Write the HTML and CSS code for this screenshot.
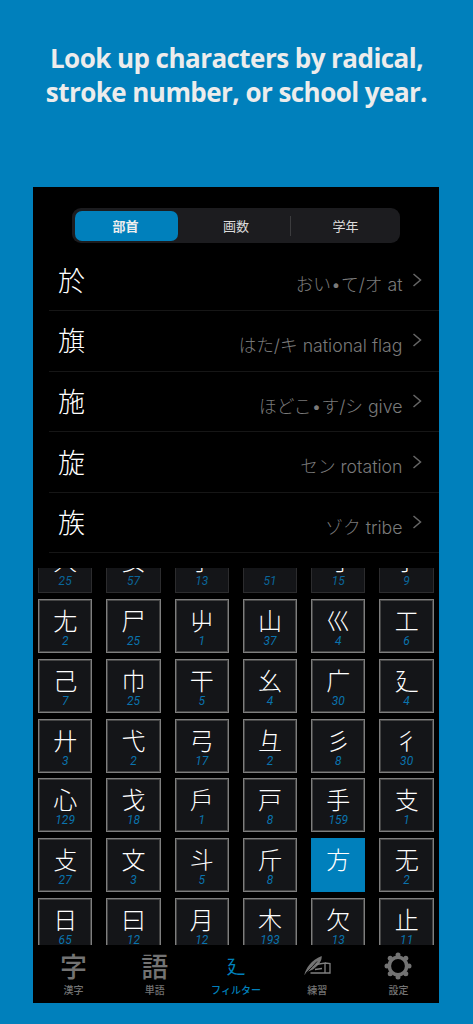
FILE: index.html
```html
<!DOCTYPE html>
<html lang="ja">
<head>
<meta charset="utf-8">
<title>Radicals</title>
<link rel="stylesheet" href="styles.css">
</head>
<body>
<h1 class="headline" lang="en">Look up characters by radical,<br>stroke number, or school year.</h1>
<main class="phone">
  <div class="segments">
    <div class="segment active">部首</div>
    <div class="segment shifted">画数</div>
    <div class="segment shifted split">学年</div>
  </div>
  <ul class="list">
    <li class="row"><span class="kanji">於</span><span class="reading">おい•て/オ at</span><svg class="chev" viewBox="0 0 10 14"><path d="M1.5 1l7 6-7 6"/></svg></li>
    <li class="row"><span class="kanji">旗</span><span class="reading">はた/キ national flag</span><svg class="chev" viewBox="0 0 10 14"><path d="M1.5 1l7 6-7 6"/></svg></li>
    <li class="row"><span class="kanji">施</span><span class="reading">ほどこ•す/シ give</span><svg class="chev" viewBox="0 0 10 14"><path d="M1.5 1l7 6-7 6"/></svg></li>
    <li class="row"><span class="kanji">旋</span><span class="reading">セン rotation</span><svg class="chev" viewBox="0 0 10 14"><path d="M1.5 1l7 6-7 6"/></svg></li>
    <li class="row"><span class="kanji">族</span><span class="reading">ゾク tribe</span><svg class="chev" viewBox="0 0 10 14"><path d="M1.5 1l7 6-7 6"/></svg></li>
  </ul>
  <div class="clip">
    <div class="grid">
      <div class="cell dim"><b>大</b><i>25</i></div><div class="cell dim"><b>女</b><i>57</i></div><div class="cell dim"><b>子</b><i>13</i></div><div class="cell dim"><b>宀</b><i>51</i></div><div class="cell dim"><b>寸</b><i>15</i></div><div class="cell dim"><b>小</b><i>9</i></div>
      <div class="cell"><b>尢</b><i>2</i></div><div class="cell"><b>尸</b><i>25</i></div><div class="cell"><b>屮</b><i>1</i></div><div class="cell"><b>山</b><i>37</i></div><div class="cell"><b>巛</b><i>4</i></div><div class="cell"><b>工</b><i>6</i></div>
      <div class="cell"><b>己</b><i>7</i></div><div class="cell"><b>巾</b><i>25</i></div><div class="cell"><b>干</b><i>5</i></div><div class="cell"><b>幺</b><i>4</i></div><div class="cell"><b>广</b><i>30</i></div><div class="cell"><b>廴</b><i>4</i></div>
      <div class="cell"><b>廾</b><i>3</i></div><div class="cell"><b>弋</b><i>2</i></div><div class="cell"><b>弓</b><i>17</i></div><div class="cell"><b>彑</b><i>2</i></div><div class="cell"><b>彡</b><i>8</i></div><div class="cell"><b>彳</b><i>30</i></div>
      <div class="cell"><b>心</b><i>129</i></div><div class="cell"><b>戈</b><i>18</i></div><div class="cell"><b>戶</b><i>1</i></div><div class="cell"><b>戸</b><i>8</i></div><div class="cell"><b>手</b><i>159</i></div><div class="cell"><b>支</b><i>1</i></div>
      <div class="cell"><b>攴</b><i>27</i></div><div class="cell"><b>文</b><i>3</i></div><div class="cell"><b>斗</b><i>5</i></div><div class="cell"><b>斤</b><i>8</i></div><div class="cell selected"><b>方</b><i></i></div><div class="cell"><b>无</b><i>2</i></div>
      <div class="cell"><b>日</b><i>65</i></div><div class="cell"><b>曰</b><i>12</i></div><div class="cell"><b>月</b><i>12</i></div><div class="cell"><b>木</b><i>193</i></div><div class="cell"><b>欠</b><i>13</i></div><div class="cell"><b>止</b><i>11</i></div>
    </div>
  </div>
  <nav class="tabs">
    <div class="tab"><span class="tab-glyph">字</span><span class="tab-label">漢字</span></div>
    <div class="tab"><span class="tab-glyph">語</span><span class="tab-label">単語</span></div>
    <div class="tab current"><span class="tab-glyph thin">廴</span><span class="tab-label">フィルター</span></div>
    <div class="tab">
      <svg class="tab-icon" viewBox="0 0 28 28">
        <path class="pen" d="M1.300 23C3 16 8 8 18.700 4C19.200 9 15 14 10 17.500L5 19.500Z"/>
        <path class="pen-cut" d="M2.500 21.500L9.500 14.500 14 9.500"/>
        <path class="pen-line" d="M13 12.500L22 11V21H7.500M22 11L27 11.500V21H22M12 17.500L19 16.500"/>
      </svg>
      <span class="tab-label">練習</span>
    </div>
    <div class="tab">
      <svg class="tab-icon" viewBox="0 0 28 28">
        <g class="gear">
          <circle cx="14" cy="3" r="2.500"/><circle cx="14" cy="25" r="2.500"/><circle cx="3" cy="14" r="2.500"/><circle cx="25" cy="14" r="2.500"/>
          <circle cx="6.200" cy="6.200" r="2.500"/><circle cx="21.800" cy="6.200" r="2.500"/><circle cx="6.200" cy="21.800" r="2.500"/><circle cx="21.800" cy="21.800" r="2.500"/>
        </g>
        <circle class="gear-ring" cx="14" cy="14" r="8.700"/>
      </svg>
      <span class="tab-label">設定</span>
    </div>
  </nav>
</main>
</body>
</html>
```
FILE: styles.css
```css
* { box-sizing: border-box; }
html, body { margin: 0; padding: 0; }
body {
  width: 473px;
  height: 1024px;
  overflow: hidden;
  background: #0080bc;
  font-family: "Noto Sans CJK JP", "Noto Sans", sans-serif;
}
.headline {
  margin: 0;
  padding-top: 41px;
  height: 187px;
  text-align: center;
  color: #ececec;
  font-family: "Open Sans", "Noto Sans", sans-serif;
  font-weight: 700;
  font-size: 26px;
  letter-spacing: -0.55px;
  line-height: 34px;
}
.phone {
  margin-left: 33px;
  width: 406px;
  height: 816px;
  background: #000;
  display: flex;
  flex-direction: column;
}
.segments {
  margin: 21px 0 0 39px;
  width: 328px;
  height: 35px;
  padding: 2.5px 3px;
  border-radius: 9px;
  background: #1c1c1f;
  display: grid;
  grid-template-columns: 103px 112px 1fr;
  align-items: center;
}
.segment {
  height: 30.500px;
  line-height: 30.500px;
  text-align: center;
  color: #dcdcdc;
  font-size: 13px;
  position: relative;
}
.segment.shifted { padding-left: 4px; }
.segment.active {
  background: #0080bc;
  border-radius: 7px;
  color: #eee;
  font-weight: 700;
  padding-right: 2px;
}
.segment.split::before {
  content: "";
  position: absolute;
  left: 0;
  top: 5px;
  height: 20px;
  width: 1px;
  background: #3c3c3e;
}
.list {
  list-style: none;
  margin: 7.500px 0 0 15.500px;
  padding: 0;
}
.row {
  height: 60.600px;
  border-bottom: 1px solid #161616;
  display: flex;
  align-items: center;
  padding: 0 17.500px 0 9.500px;
}
.kanji {
  color: #fff;
  font-size: 27px;
  font-weight: 300;
  line-height: 1;
  margin-top: -2px;
}
.reading {
  margin-left: auto;
  color: #7a7a7a;
  font-family: Inter, "Noto Sans CJK JP", sans-serif;
  font-size: 17.700px;
  font-weight: 300;
  line-height: 1;
  margin-top: 10px;
}
.chev {
  width: 10px;
  height: 14px;
  margin-left: 9px;
  margin-top: -1px;
  fill: none;
  stroke: #666;
  stroke-width: 1.500;
}
.clip {
  height: 377px;
  margin-top: 14.500px;
  overflow: hidden;
}
.grid {
  margin: -28.500px 0 0 5px;
  width: 396px;
  display: grid;
  grid-template-columns: repeat(6, 54.300px);
  grid-auto-rows: 54px;
  column-gap: 14px;
  row-gap: 5.750px;
}
.cell {
  border: 1px solid #7e7e7e;
  box-shadow: inset 0 0 0 1px #444;
  background: #141518;
  display: flex;
  flex-direction: column;
  align-items: center;
  padding-top: 8px;
}
.cell b {
  color: #fff;
  font-size: 24px;
  font-weight: 300;
  line-height: 24px;
}
.cell i {
  color: #0a73ad;
  font-family: Roboto, "Noto Sans", sans-serif;
  font-size: 12px;
  font-style: italic;
  line-height: 13px;
  margin-top: 3px;
}
.cell.dim { border-color: #2c2c2e; box-shadow: none; }
.cell.dim i { color: #0a669a; }
.cell.selected { background: #0080bc; border-color: #0080bc; box-shadow: none; }
.tabs {
  height: 58px;
  display: grid;
  grid-template-columns: repeat(5, 1fr);
  background: #000;
}
.tab {
  display: flex;
  flex-direction: column;
  align-items: center;
  color: #737373;
  padding-top: 6px;
}
.tab-glyph {
  height: 30px;
  font-size: 27px;
  font-weight: 500;
  line-height: 30px;
}
.tab-glyph.thin {
  font-size: 19px;
  font-weight: 400;
}
.tab-icon {
  width: 28px;
  height: 28px;
  margin: 1px 0;
}
.tab-label {
  margin-top: 2px;
  font-size: 10px;
  font-weight: 500;
  line-height: 14px;
}
.current { color: #0080bc; }
.pen { fill: #737373; }
.pen-cut {
  fill: none;
  stroke: #000;
  stroke-width: 0.800;
}
.pen-line {
  fill: none;
  stroke: #808080;
  stroke-width: 1.300;
}
.gear { fill: #737373; }
.gear-ring {
  fill: none;
  stroke: #737373;
  stroke-width: 3.600;
}
```
